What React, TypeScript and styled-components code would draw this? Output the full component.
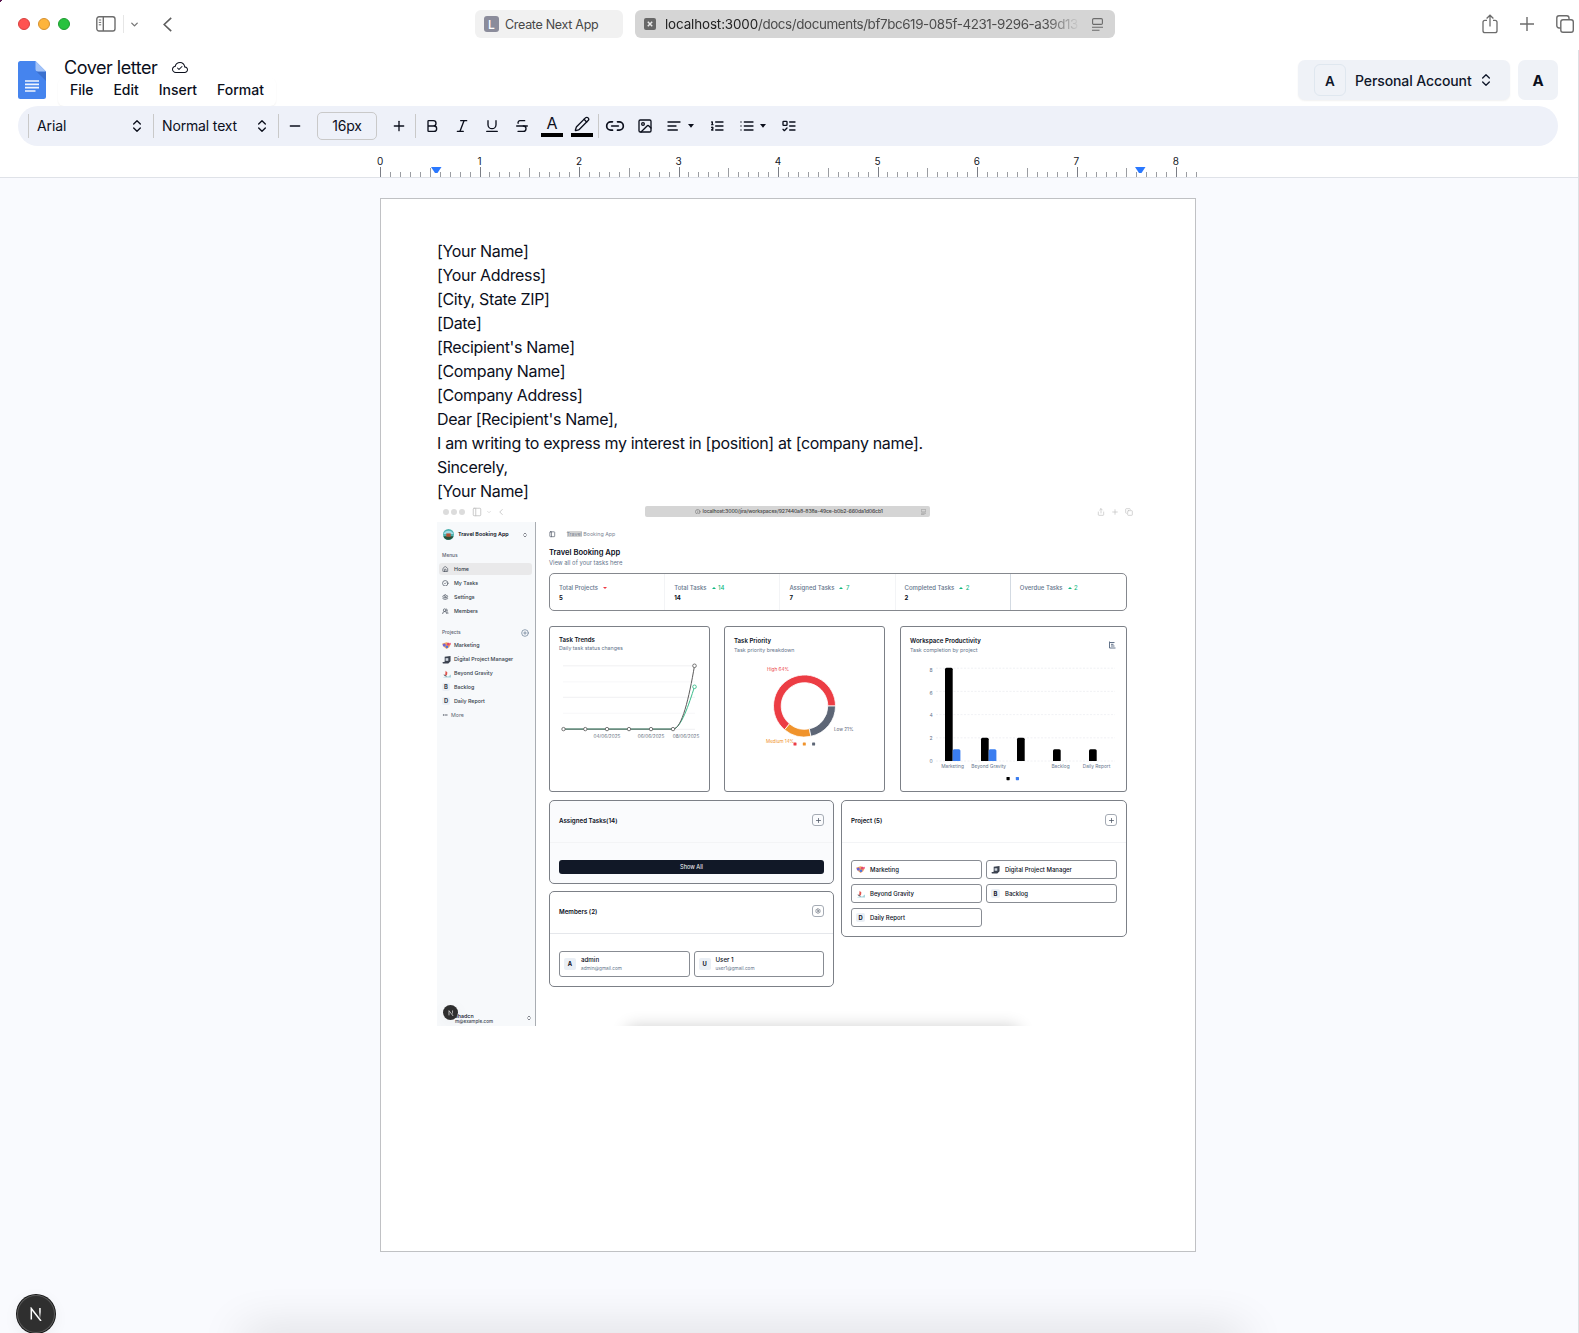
import React from "react";
import styled, { createGlobalStyle } from "styled-components";
import {
  Bold, Italic, Underline, Strikethrough, Pencil, Link2, Image as ImageIcon, ChevronsUpDown,
  Minus, Plus, House, CircleCheck, Settings, UsersRound, CirclePlus, Ellipsis, PanelLeft,
  Copy, Share, ChevronLeft, ChevronDown, Info,
} from "lucide-react";
import { BsCloudCheck } from "react-icons/bs";

const Global = createGlobalStyle`
  * { box-sizing: border-box; }
  html, body { margin: 0; background: #f9fafe; overflow: hidden; }
  body { font-family: Inter, "Liberation Sans", sans-serif; color: #0b0f1c; }
  svg { display: block; flex: none; }
`;

const Window = styled.div`
  position: relative;
  width: 1579px;
  height: 1333px;
  overflow: hidden;
  display: flex;
  flex-direction: column;
  background: #f9fafe;
`;

const Txt = styled.span<{ $s: number; $w?: number; $c?: string; $ls?: number }>`
  font-size: ${(p) => p.$s}px;
  font-weight: ${(p) => p.$w ?? 400};
  color: ${(p) => p.$c ?? "inherit"};
  letter-spacing: ${(p) => p.$ls ?? 0}px;
  line-height: 1.2;
  white-space: pre;
  flex: none;
`;

/* ---------- browser chrome ---------- */
const TitleBar = styled.div`
  height: 50px;
  flex: none;
  display: flex;
  background: linear-gradient(135deg, #5b1650 1.6px, transparent 2px), #fff;
`;
const ChromeLeft = styled.div`
  width: 475px;
  height: 48px;
  display: flex;
  align-items: center;
  padding-left: 18px;
`;
const Light = styled.i<{ $c: string; $b: string }>`
  width: 12px;
  height: 12px;
  margin-right: 8px;
  border-radius: 50%;
  background: ${(p) => p.$c};
  border: 1px solid ${(p) => p.$b};
`;
const LightGap = styled.span`
  width: 18px;
`;
const ThinRule = styled.i`
  width: 1px;
  height: 18px;
  background: #e6e6e6;
  margin: 0 5px 0 7px;
`;
const BackSlot = styled.span`
  margin-left: 23px;
`;
const Tab = styled.div`
  width: 148px;
  height: 28px;
  margin: 10px 12px 0 0;
  padding-left: 9px;
  display: flex;
  align-items: center;
  gap: 6px;
  border-radius: 6px;
  background: #f1f1f1;
`;
const Favicon = styled.b`
  width: 15px;
  height: 16px;
  border-radius: 3px;
  background: #8b8c9b;
  color: #fff;
  font-size: 12px;
  font-weight: 500;
  line-height: 17px;
  text-align: center;
`;
const UrlBar = styled.div`
  width: 480px;
  height: 28px;
  margin-top: 10px;
  padding: 0 12px 0 9px;
  display: flex;
  align-items: center;
  border-radius: 6px;
  background: #d5d5d5;
`;
const UrlText = styled.div`
  width: 427px;
  padding: 0 0 0 9px;
  display: flex;
  mask-image: linear-gradient(90deg, #000 390px, transparent 424px);
`;
const ChromeRight = styled.div`
  margin: 0 5px 0 auto;
  height: 47px;
  display: flex;
  align-items: center;
  gap: 22px;
`;

/* ---------- document header ---------- */
const Editor = styled.div`
  flex: 1;
  display: flex;
  flex-direction: column;
  border-right: 1px solid #dedfe3;
`;
const Header = styled.header`
  height: 56px;
  flex: none;
  display: flex;
  padding: 10px 20px 0 18px;
  background: #fff;
`;
const LogoSlot = styled.span`
  margin-top: 1px;
`;
const Titles = styled.div`
  margin-left: 12px;
  margin-top: -2px;
`;
const TitleRow = styled.div`
  display: flex;
  align-items: center;
  height: 20px;
  padding-left: 6px;
  gap: 15px;
`;
const Menubar = styled.nav`
  width: 218px;
  height: 28px;
  padding: 0 12px 4px;
  display: flex;
  align-items: center;
  justify-content: space-between;
  border-radius: 6px;
  box-shadow: 0 1px 2px rgba(0, 0, 0, 0.06);
`;
const Accounts = styled.div`
  display: flex;
  gap: 8px;
  margin-left: auto;
`;
const AccountButton = styled.button`
  width: 212px;
  height: 40px;
  border: 0;
  padding: 0 16px;
  display: flex;
  align-items: center;
  font-family: inherit;
  color: #0f172a;
  border-radius: 7px;
  background: #eff2f7;
  box-shadow: 0 1px 2px rgba(0, 0, 0, 0.06);
`;
const AccountName = styled(Txt)`
  padding-top: 2px;
  margin-right: auto;
`;
const Letter = styled.span`
  width: 32px;
  height: 32px;
  margin-right: 9px;
  display: grid;
  place-items: center;
  border: 1px solid #dfe7ef;
  border-radius: 6px;
  padding-top: 2px;
`;
const UserButton = styled.button`
  width: 40px;
  height: 40px;
  border: 0;
  font: 700 15px Inter, sans-serif;
  color: #0b0f1c;
  border-radius: 7px;
  background: #eff2f7;
`;

/* ---------- toolbar ---------- */
const ToolbarWrap = styled.div`
  padding: 0 20px 0 18px;
  background: #fff;
`;
const Toolbar = styled.div`
  height: 40px;
  display: flex;
  align-items: center;
  padding-left: 10px;
  border-radius: 20px;
  background: #eef1f9;
`;
const Sep = styled.i`
  width: 1px;
  height: 24px;
  background: #c9c9c9;
`;
const Select = styled.div`
  width: 124px;
  padding: 0 8px 0 8px;
  display: flex;
  align-items: center;
  justify-content: space-between;
`;
const Tool = styled.span<{ $w: number }>`
  width: ${(p) => p.$w}px;
  height: 24px;
  display: flex;
  align-items: center;
  justify-content: center;
  flex: none;
`;
const CaretTool = styled(Tool)<{ $l: number; $r: number }>`
  justify-content: flex-start;
  margin-left: ${(p) => p.$l}px;
  margin-right: ${(p) => p.$r}px;
`;
const InkTool = styled(Tool)`
  flex-direction: column;
  justify-content: flex-end;
  height: 21px;
`;
const InkLetter = styled.span`
  flex: none;
  height: 16px;
  font-size: 16px;
  line-height: 15px;
`;
const Ink = styled.i`
  flex: none;
  width: 22px;
  height: 4px;
  background: #000;
  margin-top: 1px;
`;
const SizeBox = styled.span`
  width: 60px;
  height: 28px;
  margin: 0 6px;
  display: grid;
  place-items: center;
  border: 1px solid #c9c9c9;
  border-radius: 5px;
`;

/* ---------- ruler ---------- */
const Ruler = styled.div`
  height: 32px;
  background: #fff;
  border-bottom: 1px solid #dfe2e8;
  padding: 0 0 0 370px;
`;

/* ---------- page ---------- */
const Page = styled.article`
  width: 816px;
  height: 1054px;
  margin: 20px 0 0 380px;
  padding: 40px 56px 0;
  background: #fff;
  border: 1px solid #c0c1c4;
`;
const Line = styled.p`
  margin: 0;
  height: 24px;
  line-height: 24px;
  font-size: 16px;
  letter-spacing: -0.335px;
  white-space: pre;
`;

/* ---------- embedded dashboard ---------- */
const Shot = styled.figure`
  margin: 0;
  width: 702px;
  height: 523px;
  overflow: hidden;
  position: relative;
  background: #fff;
`;
const ShotBar = styled.div`
  height: 19px;
  display: flex;
  align-items: center;
  padding: 0 6px 2px 6px;
  color: #c0c0c0;
`;
const ShotLights = styled.div`
  width: 202px;
  display: flex;
  align-items: center;
`;
const Dot = styled.i`
  width: 6px;
  height: 6px;
  margin-right: 2px;
  border-radius: 50%;
  background: #dcdcdc;
`;
const ShotUrl = styled.div`
  width: 285px;
  height: 11px;
  display: flex;
  align-items: center;
  gap: 2px;
  padding: 0 4px 0 50px;
  border-radius: 2px;
  background: #d5d5d5;
  color: #555;
`;
const Push = styled.span`
  margin-left: auto;
`;
const ShotActions = styled.div`
  margin-left: auto;
  display: flex;
  gap: 6px;
`;
const ShotBody = styled.div`
  display: flex;
  height: 504px;
`;
const Side = styled.aside`
  width: 99px;
  flex: none;
  display: flex;
  flex-direction: column;
  padding: 0 3px 0 2px;
  background: #f7f9fb;
  border-right: 1px solid #a9adb2;
`;
const SideHead = styled.div`
  height: 26px;
  display: flex;
  align-items: center;
  padding: 0 4px 1px 4px;
  gap: 4px;
`;
const SideLabel = styled.div<{ $t?: number }>`
  height: 15px;
  margin-top: ${(p) => p.$t ?? 0}px;
  display: flex;
  align-items: center;
  justify-content: space-between;
  padding: 1px 3px 0 3px;
`;
const SideRow = styled.div<{ $on?: boolean }>`
  height: 12px;
  margin-bottom: 2px;
  padding-left: 3px;
  display: flex;
  align-items: center;
  border-radius: 3px;
  color: #333b48;
  background: ${(p) => (p.$on ? "#e9e9ea" : "transparent")};
`;
const ProjectRows = styled.div`
  margin-top: -1px;
`;
const IconSlot = styled.span<{ $w?: number; $l?: number }>`
  width: ${(p) => p.$w ?? 12}px;
  padding-left: ${(p) => p.$l ?? 0}px;
  display: flex;
  align-items: center;
`;
const SideFoot = styled.div`
  margin-top: auto;
  height: 17px;
  display: flex;
  align-items: center;
  justify-content: space-between;
`;
const FootNames = styled.div`
  display: flex;
  flex-direction: column;
  padding: 2px 0 0 16px;
`;
const Main = styled.div`
  flex: 1;
  min-width: 0;
  padding: 0 0 0 13px;
`;
const Crumbs = styled.div`
  height: 24px;
  display: flex;
  align-items: center;
  gap: 11px;
  padding-top: 1px;
  color: #4b5563;
`;
const Mark = styled.span`
  background: #d3d3d3;
`;
const Heading = styled.div`
  height: 27px;
  padding-top: 2px;
  display: flex;
  flex-direction: column;
  gap: 2px;
`;
const Stats = styled.div`
  height: 38px;
  width: 578px;
  display: grid;
  grid-template-columns: repeat(5, 1fr);
  border: 1px solid #85888e;
  border-radius: 5px;
`;
const Stat = styled.div<{ $strong?: boolean }>`
  padding: 10px 0 0 9px;
  display: flex;
  flex-direction: column;
  gap: 3px;
  border-right: 1px solid ${(p) => (p.$strong ? "#d3dae2" : "#f3f4f6")};
  &:last-child { border-right: 0; }
`;
const StatTop = styled.div`
  display: flex;
  align-items: center;
`;
const Tri = styled.i<{ $up?: boolean }>`
  margin: 0 2.5px 0 5px;
  border: 2px solid transparent;
  border-width: ${(p) => (p.$up ? "0 2px 2px" : "2px 2px 0")};
  border-color: ${(p) => (p.$up ? "transparent transparent #10b981" : "#ef3b44 transparent transparent")};
`;
const Charts = styled.div`
  width: 578px;
  margin-top: 15px;
  display: flex;
  gap: 14px;
`;
const Card = styled.section<{ $w: number; $h: number; $bg?: string; $r?: number }>`
  width: ${(p) => p.$w}px;
  height: ${(p) => p.$h}px;
  flex: none;
  border: 1px solid #7c8087;
  border-radius: ${(p) => p.$r ?? 3}px;
  background: ${(p) => p.$bg ?? "#fff"};
  overflow: hidden;
`;
const WideCard = styled(Card)`
  margin-left: auto;
`;
const ChartHead = styled.div<{ $t: number }>`
  padding: ${(p) => p.$t}px 10px 0 9px;
  height: 26px;
  display: flex;
  justify-content: space-between;
`;
const HeadIcon = styled.span`
  padding-top: 4px;
`;
const Stack = styled.div<{ $g?: number }>`
  display: flex;
  flex-direction: column;
  gap: ${(p) => p.$g ?? 2}px;
`;
const Lower = styled.div`
  width: 578px;
  margin-top: 8px;
  display: flex;
  justify-content: space-between;
  align-items: flex-start;
`;
const LowerCol = styled.div`
  display: flex;
  flex-direction: column;
  gap: 7px;
`;
const CardHead = styled.div<{ $c?: string }>`
  height: 42px;
  padding: 0 9px 3px;
  display: flex;
  align-items: center;
  justify-content: space-between;
  border-bottom: 1px solid ${(p) => p.$c ?? "#f3f4f6"};
`;
const CardTitle = styled(Txt)`
  padding-top: 1px;
`;
const MiniButton = styled.span`
  width: 12px;
  height: 12px;
  display: grid;
  place-items: center;
  border: 1px solid #a5abb4;
  border-radius: 3px;
  color: #4b5563;
`;
const ShowAll = styled.div`
  margin: 17px 9px 0;
  height: 14px;
  display: grid;
  place-items: center;
  border-radius: 3px;
  background: #111827;
`;
const Tiles = styled.div`
  display: grid;
  grid-template-columns: 1fr 1fr;
  gap: 5px 4px;
  padding: 17px 9px 0;
`;
const Tile = styled.div<{ $h: number; $g: number }>`
  height: ${(p) => p.$h}px;
  padding-left: 4px;
  display: flex;
  align-items: center;
  gap: ${(p) => p.$g}px;
  border: 1px solid #888c93;
  border-radius: 3px;
`;
const Badge = styled.span<{ $s: number }>`
  width: ${(p) => p.$s}px;
  height: ${(p) => p.$s}px;
  display: grid;
  place-items: center;
  border-radius: 2px;
  background: #eaeff5;
  font-size: 5.8px;
  font-weight: 700;
  line-height: 1;
`;
const NBadge = styled.div<{ $x: number; $y: number; $d: number }>`
  position: absolute;
  left: ${(p) => p.$x}px;
  top: ${(p) => p.$y}px;
  width: ${(p) => p.$d}px;
  height: ${(p) => p.$d}px;
  border-radius: 50%;
  background: #2f2f2f;
  box-shadow: 0 0 0 ${(p) => (p.$d > 20 ? 1 : 0)}px #161616, inset 0 0 0 ${(p) => (p.$d > 20 ? 1 : 0)}px #5a5a5a, 0 4px 16px rgba(0, 0, 0, 0.06);
  display: grid;
  place-items: center;
`;
const BottomShade = styled.div<{ $x: number; $w: number; $b: number }>`
  position: absolute;
  left: ${(p) => p.$x}px;
  width: ${(p) => p.$w}px;
  height: 20px;
  bottom: -20px;
  border-radius: 10px;
  box-shadow: 0 0 ${(p) => p.$b}px rgba(0, 0, 0, 0.19);
`;

const SidebarGlyph = () => (
  <svg width="20" height="16" viewBox="0 0 20 16" fill="none" stroke="#6c6c6c" strokeWidth="1.4">
    <rect x="0.8" y="0.8" width="18.2" height="14.2" rx="2.2" />
    <path d="M7.3 1v14" />
    <path d="M2.8 4h2.4M2.8 6.4h2.4M2.8 8.8h2.4" strokeWidth="1" />
  </svg>
);
const ShareGlyph = () => (
  <svg width="16" height="20" viewBox="0 0 16 20" fill="none" stroke="#6c6c6c" strokeWidth="1.3">
    <path d="M5 6.3H3a2 2 0 0 0-2 2v8.4a2 2 0 0 0 2 2h10a2 2 0 0 0 2-2V8.3a2 2 0 0 0-2-2h-2" />
    <path d="M8 12.5V1.5M4.6 4.5 8 1.2l3.4 3.3" />
  </svg>
);
const CopyGlyph = () => (
  <svg width="18" height="18" viewBox="0 0 18 18" fill="none" stroke="#6c6c6c" strokeWidth="1.4">
    <rect x="4.8" y="4.8" width="12.5" height="12.5" rx="2.2" />
    <path d="M4.5 13H3a2.2 2.2 0 0 1-2.2-2.2V3A2.2 2.2 0 0 1 3 .8h7.8A2.2 2.2 0 0 1 13 3v1.5" />
  </svg>
);
const ReaderGlyph = ({ s = 13, c = "#6b6b6b" }: { s?: number; c?: string }) => (
  <svg width={(s * 11) / 13} height={s} viewBox="0 0 11 13" fill="none" stroke={c} strokeWidth="1.1">
    <rect x="0.6" y="0.6" width="9.8" height="5.8" rx="1.2" />
    <path d="M0 9.2h11M0 12.2h7.5" />
  </svg>
);
const BackGlyph = () => (
  <svg width="9" height="15" viewBox="0 0 9 15" fill="none" stroke="#5e5e5e" strokeWidth="1.6"><path d="M8.2.8 1.2 7.5l7 6.7" /></svg>
);
const DocsGlyph = () => (
  <svg width="28" height="38" viewBox="0 0 28 38">
    <path d="M2.5 0H17.5L28 10.5V35.5A2.5 2.5 0 0 1 25.5 38h-23A2.5 2.5 0 0 1 0 35.5v-33A2.5 2.5 0 0 1 2.5 0Z" fill="#4584ee" />
    <path d="M18.2 10.2 28 20v-9.5Z" fill="#3a70cf" />
    <path d="M17.5 0 28 10.5h-8a2.5 2.5 0 0 1-2.5-2.5Z" fill="#a3c3f8" />
    <path d="M7 20h14M7 23.3h14M7 26.7h14M7 30h10.5" stroke="#f1f5fe" strokeWidth="1.7" />
  </svg>
);
const LineGlyph = ({ d }: { d: string }) => (
  <svg width="16" height="16" viewBox="0 0 24 24" fill="none" stroke="currentColor" strokeWidth="2" strokeLinecap="round" strokeLinejoin="round">
    <path d={d} />
  </svg>
);
const Caret = () => (
  <svg width="6" height="4" viewBox="0 0 6 4"><path d="M0 0h6L3 3.8Z" fill="#0b0f1c" /></svg>
);
const NGlyph = ({ s }: { s: number }) => (
  <svg width={s} height={s} viewBox="0 0 14 14" fill="none">
    <defs>
      <linearGradient id="nfade" x1="0" y1="0" x2="0" y2="1"><stop offset=".4" stopColor="#fff" /><stop offset="1" stopColor="#fff" stopOpacity=".1" /></linearGradient>
    </defs>
    <path d="M2.3 12.5V1.5L12 14" stroke="#fff" strokeWidth="1.5" />
    <rect x="10.2" y="1" width="1.5" height="10" fill="url(#nfade)" />
  </svg>
);

const Thumb = ({ kind, s = 9 }: { kind: "travel" | "market" | "digital" | "gravity"; s?: number }) => (
  <svg width={s} height={s} viewBox="0 0 10 10">
    {kind === "travel" && (<>
      <circle cx="5" cy="5" r="5" fill="#4fb3b0" /><path d="M.5 4.5a5 5 0 0 1 9 0Z" fill="#9fdce6" />
      <path d="M.5 6.5h9A5 5 0 0 1 1 8Z" fill="#27503a" /><rect x="3" y="4" width="4" height="3" fill="#b8502f" />
    </>)}
    {kind === "market" && (<>
      <path d="M0 3 5 1.5 10 3 8 7 5 9 2 6.5Z" fill="#f3a25e" /><circle cx="2.5" cy="4.5" r="1.7" fill="#6d63d8" />
      <circle cx="7" cy="3.5" r="1.6" fill="#e24a6b" /><circle cx="5.5" cy="6.5" r="1.5" fill="#4c72e0" /><circle cx="9" cy="3" r="1" fill="#f06a9b" />
    </>)}
    {kind === "digital" && (<>
      <path d="M3 2 9.5 1v6L7 9.5H1L.5 8 3 7.5Z" fill="#3c4350" /><path d="M4 3.5h3v3H4Z" fill="#cfd6df" />
    </>)}
    {kind === "gravity" && (<>
      <path d="M1 9.5 4 8l3 .2L10 6v3.5Z" fill="#a7d3dc" /><path d="M4 2 6 4 5.5 7H3.5Z" fill="#e2544d" /><path d="M2 6.5 5 8" stroke="#4a3b44" />
    </>)}
  </svg>
);

const LETTER = [
  "[Your Name]", "[Your Address]", "[City, State ZIP]", "[Date]", "[Recipient's Name]", "[Company Name]",
  "[Company Address]", "Dear [Recipient's Name],",
  "I am writing to express my interest in [position] at [company name].", "Sincerely,", "[Your Name]",
];

const RulerScale = () => {
  const ticks = Array.from({ length: 83 }, (_, i) => i);
  return (
    <svg width="840" height="31" viewBox="370 146 840 31">
      {ticks.map((i) => (
        <rect key={i} x={Math.round(380 + i * 9.95)} y={i % 10 === 0 ? 167 : i % 5 === 0 ? 168 : 172} width="1" height="10" fill={i % 10 === 0 ? "#7b7e86" : "#9b9da2"} />
      ))}
      {[0, 1, 2, 3, 4, 5, 6, 7, 8].map((n) => (
        <text key={n} x={380.2 + n * 99.45} y="165" fontSize="10" textAnchor="middle" fill="#14171f">{n}</text>
      ))}
      <path d="M431 167h10.5l-4 6h-2.5Z" fill="#2a78ff" />
      <path d="M1135 167h10.5l-4 6h-2.5Z" fill="#2a78ff" />
    </svg>
  );
};

const GREY = "#64748b";

const TrendChart = () => {
  const xs = [14.5, 36.3, 58, 80, 102, 124];
  return (
    <svg width="159" height="130" viewBox="1 -0.8 159 130">
      {[12, 28, 43.5, 59.5, 75.5].map((y, i) => <path key={y} d={`M14 ${y}H146`} stroke={i % 2 ? "#f5f5f7" : "#ececef"} strokeWidth=".8" />)}
      <path d="M14.5 75.3H124C132 75 140 50 145.5 33" fill="none" stroke="#3cbd8c" strokeWidth="1" />
      <path d="M14.5 75.3H124C133 75 140 44 145.5 12" fill="none" stroke="#5b5b5b" strokeWidth="1" />
      {xs.map((x) => <circle key={x} cx={x} cy="75.3" r="1.7" fill="#fff" stroke="#666" strokeWidth=".9" />)}
      <circle cx="145.5" cy="12" r="1.8" fill="#fff" stroke="#666" strokeWidth=".9" />
      <circle cx="145.5" cy="33" r="1.8" fill="#fff" stroke="#3cbd8c" strokeWidth=".9" />
      {([["04/06/2025", 58], ["06/06/2025", 102], ["08/06/2025", 137]] as [string, number][]).map(([t, x]) => (
        <text key={t} x={x} y="84.5" fontSize="4.7" textAnchor="middle" fill="#667080">{t}</text>
      ))}
    </svg>
  );
};

const arc = (a: number, b: number) => {
  const p = (r: number, d: number) => `${80.5 + r * Math.cos((d * Math.PI) / 180)} ${53 + r * Math.sin((d * Math.PI) / 180)}`;
  const big = b - a > 180 ? 1 : 0;
  return `M${p(31, a)}A31 31 0 ${big} 1 ${p(31, b)}L${p(23.3, b)}A23.3 23.3 0 ${big} 0 ${p(23.3, a)}Z`;
};
const Donut = () => (
  <svg width="159" height="110" viewBox="1 0 159 110">
    <path d={arc(130, 360)} fill="#ec3d44" stroke="#fff" strokeWidth=".8" />
    <path d={arc(78, 130)} fill="#f0932c" stroke="#fff" strokeWidth=".8" />
    <path d={arc(0, 78)} fill="#5d6676" stroke="#fff" strokeWidth=".8" />
    <text x="43" y="17.5" fontSize="4.7" fill="#ec3d44">High 64%</text>
    <text x="42" y="90" fontSize="4.6" fill="#f0932c">Medium 14%</text>
    <text x="110" y="78" fontSize="4.6" fill="#5d6676">Low 21%</text>
    {["#ec3d44", "#f0932c", "#5d6676"].map((c, i) => <rect key={c} x={69.5 + i * 9.3} y="89.5" width="3" height="3" rx=".6" fill={c} />)}
  </svg>
);
const Bars = () => {
  const data = [[45, 8, 1], [81, 2, 1], [117, 2, 0], [153, 1, 0], [189, 1, 0]];
  const labels: [string, number][] = [["Marketing", 52.5], ["Beyond Gravity", 88.7], ["Backlog", 160.5], ["Daily Report", 196.5]];
  return (
    <svg width="225" height="138" viewBox="1 0 225 138">
      {[0, 2, 4, 6, 8].map((v) => (
        <g key={v}>
          <path d={`M36 ${108 - v * 11.6}H215`} stroke="#eceef1" strokeWidth=".8" strokeDasharray="2 1.5" />
          <text x="31" y={110 - v * 11.4} fontSize="5" textAnchor="middle" fill={GREY}>{v}</text>
        </g>
      ))}
      {data.map(([x, a, b]) => (
        <g key={x}>
          <path d={`M${x} 108V${109.5 - a * 11.65}q0-1.5 1.5-1.5h4.7q1.5 0 1.5 1.5V108Z`} fill="#000" />
          {b > 0 && <path d={`M${x + 7.7} 108V${109.5 - b * 11.65}q0-1.5 1.5-1.5h4.7q1.5 0 1.5 1.5V108Z`} fill="#3a7df0" />}
        </g>
      ))}
      {labels.map(([t, x]) => <text key={t} x={x} y="114.8" fontSize="4.8" textAnchor="middle" fill={GREY}>{t}</text>)}
      <rect x="106.5" y="124" width="3.2" height="3.2" rx=".6" fill="#000" />
      <rect x="115.8" y="124" width="3.2" height="3.2" rx=".6" fill="#3a7df0" />
    </svg>
  );
};

const MENU = [["Home", House], ["My Tasks", CircleCheck], ["Settings", Settings], ["Members", UsersRound]] as const;
const PROJECTS = [
  { name: "Marketing", thumb: "market" }, { name: "Digital Project Manager", thumb: "digital" },
  { name: "Beyond Gravity", thumb: "gravity" }, { name: "Backlog" }, { name: "Daily Report" },
] as { name: string; thumb?: "market" | "digital" | "gravity" }[];

const Dashboard = () => (
  <Shot>
    <ShotBar>
      <ShotLights>
        <Dot /><Dot /><Dot />
        <IconSlot $w={19} $l={5}><PanelLeft size={10} strokeWidth={2} /></IconSlot>
        <IconSlot $w={10}><ChevronDown size={6} /></IconSlot>
        <ChevronLeft size={10} />
      </ShotLights>
      <ShotUrl>
        <Info size={5.5} />
        <Txt $s={5.2} $w={500} $ls={-0.15} $c="#444">localhost:3000/jira/workspaces/927440a8-838a-49ce-b0b2-660da1d06cb1</Txt>
        <Push><ReaderGlyph s={6} c="#888" /></Push>
      </ShotUrl>
      <ShotActions><Share size={8} /><Plus size={8} /><Copy size={8} /></ShotActions>
    </ShotBar>
    <ShotBody>
      <Side>
        <SideHead>
          <Thumb kind="travel" s={11} />
          <Txt $s={5.4} $w={600}>Travel Booking App</Txt>
          <Push><ChevronsUpDown size={6} /></Push>
        </SideHead>
        <SideLabel><Txt $s={4.8} $c="#5b6472" $w={500}>Menus</Txt></SideLabel>
        {MENU.map(([label, Icon], i) => (
          <SideRow key={label} $on={i === 0}><IconSlot><Icon size={6.5} strokeWidth={2.2} /></IconSlot><Txt $s={5.3} $w={500}>{label}</Txt></SideRow>
        ))}
        <SideLabel $t={6}><Txt $s={4.8} $c="#5b6472" $w={500}>Projects</Txt><CirclePlus size={8} color="#5f748c" /></SideLabel>
        <ProjectRows>
          {PROJECTS.map(({ name, thumb }) => (
            <SideRow key={name}><IconSlot>{thumb ? <Thumb kind={thumb} /> : <Badge $s={8}>{name[0]}</Badge>}</IconSlot><Txt $s={5.3} $w={500}>{name}</Txt></SideRow>
          ))}
          <SideRow><IconSlot $w={9}><Ellipsis size={6} /></IconSlot><Txt $s={5.3} $c="#5b6472">More</Txt></SideRow>
        </ProjectRows>
        <SideFoot>
          <FootNames><Txt $s={5.3} $w={500}>shadcn</Txt><Txt $s={4.6} $w={500} $c="#3b4350">m@example.com</Txt></FootNames>
          <ChevronsUpDown size={6} />
        </SideFoot>
      </Side>
      <Main>
        <Crumbs><PanelLeft size={6.5} strokeWidth={2.4} /><Txt $s={5.3} $c="#7b8594"><Mark>Travel</Mark> Booking App</Txt></Crumbs>
        <Heading><Txt $s={7.6} $w={600}>Travel Booking App</Txt><Txt $s={5.9} $c={GREY}>View all of your tasks here</Txt></Heading>
        <Stats>
          {[["Total Projects", "", "5"], ["Total Tasks", "14", "14"], ["Assigned Tasks", "7", "7"], ["Completed Tasks", "2", "2"], ["Overdue Tasks", "2", ""]].map(([l, d, v], i) => (
            <Stat key={l} $strong={i === 3}>
              <StatTop><Txt $s={6} $c={GREY} $w={500}>{l}</Txt><Tri $up={d !== ""} /><Txt $s={6} $c="#10b981" $w={500}>{d}</Txt></StatTop>
              <Txt $s={6} $w={700}>{v}</Txt>
            </Stat>
          ))}
        </Stats>
        <Charts>
          <Card $w={161} $h={166}>
            <ChartHead $t={9}><Stack><Txt $s={6.1} $w={600}>Task Trends</Txt><Txt $s={5.3} $c={GREY}>Daily task status changes</Txt></Stack></ChartHead>
            <TrendChart />
          </Card>
          <Card $w={161} $h={166}>
            <ChartHead $t={10}><Stack $g={2.6}><Txt $s={6.1} $w={600}>Task Priority</Txt><Txt $s={5.3} $c={GREY}>Task priority breakdown</Txt></Stack></ChartHead>
            <Donut />
          </Card>
          <WideCard $w={227} $h={166}>
            <ChartHead $t={10}>
              <Stack $g={2.6}><Txt $s={6.1} $w={600}>Workspace Productivity</Txt><Txt $s={5.3} $c={GREY}>Task completion by project</Txt></Stack>
              <HeadIcon><svg width="8" height="8" viewBox="0 0 8 8" fill="none" stroke="#64748b"><path d="M1.5 .5v6.5h6M1.500 1.500h5M3 3.300h2.500M3 5h3.500" /></svg></HeadIcon>
            </ChartHead>
            <Bars />
          </WideCard>
        </Charts>
        <Lower>
          <LowerCol>
            <Card $w={285} $h={84} $bg="#fafbfd" $r={5}>
              <CardHead><CardTitle $s={6.2} $w={600}>Assigned Tasks(14)</CardTitle><MiniButton><Plus size={7} strokeWidth={2.6} /></MiniButton></CardHead>
              <ShowAll><Txt $s={5.6} $c="#fff">Show All</Txt></ShowAll>
            </Card>
            <Card $w={285} $h={96} $r={5}>
              <CardHead $c="#e5e7eb"><CardTitle $s={6.2} $w={600}>Members (2)</CardTitle><MiniButton><Settings size={6} /></MiniButton></CardHead>
              <Tiles>
                {[["A", "admin", "admin@gmail.com"], ["U", "User 1", "user1@gmail.com"]].map(([b, n, m]) => (
                  <Tile key={b} $h={26} $g={5}><Badge $s={12}>{b}</Badge><Stack><Txt $s={6.2} $w={500}>{n}</Txt><Txt $s={4.7} $c={GREY}>{m}</Txt></Stack></Tile>
                ))}
              </Tiles>
            </Card>
          </LowerCol>
          <Card $w={286} $h={137} $r={5}>
            <CardHead><CardTitle $s={6.2} $w={600}>Project (5)</CardTitle><MiniButton><Plus size={7} strokeWidth={2.6} /></MiniButton></CardHead>
            <Tiles>
              {PROJECTS.map(({ name, thumb }) => (
                <Tile key={name} $h={19} $g={5}>{thumb ? <Thumb kind={thumb} /> : <Badge $s={9}>{name[0]}</Badge>}<Txt $s={6} $w={500}>{name}</Txt></Tile>
              ))}
            </Tiles>
          </Card>
        </Lower>
      </Main>
    </ShotBody>
    <NBadge $x={6} $y={502} $d={15}><NGlyph s={6} /></NBadge>
    <BottomShade $x={188} $w={396} $b={16} />
  </Shot>
);

export default function App() {
  return (
    <Window>
      <Global />
      <TitleBar>
        <ChromeLeft>
          <Light $c="#ff5350" $b="#d8403f" /><Light $c="#fdb43c" $b="#d6912f" /><Light $c="#28c23f" $b="#1d9c30" />
          <LightGap />
          <SidebarGlyph />
          <ThinRule />
          <ChevronDown size={11} strokeWidth={3} color="#777" />
          <BackSlot><BackGlyph /></BackSlot>
        </ChromeLeft>
        <Tab><Favicon>L</Favicon><Txt $s={12.5} $c="#474747" $ls={-0.3}>Create Next App</Txt></Tab>
        <UrlBar>
          <svg width="12" height="12" viewBox="0 0 12 12"><rect width="12" height="12" rx="2" fill="#676767" /><path d="m3.8 3.8 4.4 4.4m0-4.4L3.8 8.2" stroke="#e8e8e8" strokeWidth="1.5" /></svg>
          <UrlText><Txt $s={13.4} $c="#222" $ls={-0.12}>localhost:3000</Txt><Txt $s={13.4} $c="#4c4c4c" $ls={-0.4}>/docs/documents/bf7bc619-085f-4231-9296-a39d13</Txt></UrlText>
          <Push><ReaderGlyph /></Push>
        </UrlBar>
        <ChromeRight>
          <ShareGlyph />
          <svg width="14" height="14" viewBox="0 0 14 14" stroke="#6c6c6c" strokeWidth="1.4"><path d="M7 0v14M0 7h14" /></svg>
          <CopyGlyph />
        </ChromeRight>
      </TitleBar>
      <Editor>
        <Header>
          <LogoSlot><DocsGlyph /></LogoSlot>
          <Titles>
            <TitleRow><Txt $s={18} $ls={-0.48}>Cover letter</Txt><BsCloudCheck size={16} /></TitleRow>
            <Menubar>
              {["File", "Edit", "Insert", "Format"].map((m) => <Txt key={m} $s={14} $w={500}>{m}</Txt>)}
            </Menubar>
          </Titles>
          <Accounts>
            <AccountButton>
              <Letter><Txt $s={13.5} $w={600}>A</Txt></Letter>
              <AccountName $s={14} $w={500} $ls={-0.1}>Personal Account</AccountName>
              <ChevronsUpDown size={16} />
            </AccountButton>
            <UserButton>A</UserButton>
          </Accounts>
        </Header>
        <ToolbarWrap>
          <Toolbar>
            <Sep />
            <Select><Txt $s={14} $ls={-0.1}>Arial</Txt><ChevronsUpDown size={16} /></Select>
            <Sep />
            <Select><Txt $s={14} $ls={-0.15}>Normal text</Txt><ChevronsUpDown size={16} /></Select>
            <Sep />
            <Tool $w={32}><Minus size={16} /></Tool>
            <SizeBox><Txt $s={14} $ls={-0.2}>16px</Txt></SizeBox>
            <Tool $w={32}><Plus size={16} /></Tool>
            <Sep />
            <Tool $w={32}><Bold size={16} /></Tool>
            <Tool $w={28}><Italic size={16} /></Tool>
            <Tool $w={32}><Underline size={16} /></Tool>
            <Tool $w={28}><Strikethrough size={16} /></Tool>
            <InkTool $w={32}><InkLetter>A</InkLetter><Ink /></InkTool>
            <InkTool $w={28}><Pencil size={16} /><Ink /></InkTool>
            <Tool $w={2} />
            <Sep />
            <Tool $w={32}><Link2 size={20} /></Tool>
            <Tool $w={28}><ImageIcon size={16} /></Tool>
            <Tool $w={30}><LineGlyph d="M21 6H3M15 12H3M17 18H3" /></Tool>
            <CaretTool $w={11} $l={-1} $r={8}><Caret /></CaretTool>
            <Tool $w={20}><LineGlyph d="M10 6h11M10 12h11M10 18h11M4 6h1v4M4 10h2M6 18H4c0-1 2-2 2-3s-1-1.5-2-1" /></Tool>
            <Tool $w={40}><LineGlyph d="M8 6h13M8 12h13M8 18h13M3 6h.01M3 12h.01M3 18h.01" /></Tool>
            <CaretTool $w={11} $l={-7} $r={4}><Caret /></CaretTool>
            <Tool $w={28}><LineGlyph d="M4 5h4a1 1 0 0 1 1 1v4a1 1 0 0 1-1 1H4a1 1 0 0 1-1-1V6a1 1 0 0 1 1-1ZM3 17l2 2 4-4M13 6h8M13 12h8M13 18h8" /></Tool>
          </Toolbar>
        </ToolbarWrap>
        <Ruler><RulerScale /></Ruler>
        <Page>
          {LETTER.map((t, i) => <Line key={i}>{t}</Line>)}
          <Dashboard />
        </Page>
      </Editor>
      <NBadge $x={17} $y={1295} $d={38}><NGlyph s={14} /></NBadge>
      <BottomShade $x={241} $w={1004} $b={46} />
    </Window>
  );
}
